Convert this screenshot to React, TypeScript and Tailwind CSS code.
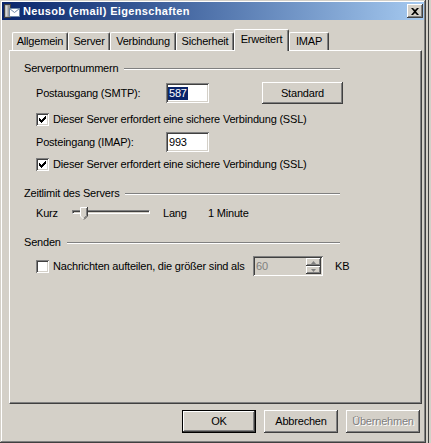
const raised =
  "shadow-[inset_-1px_-1px_#404040,inset_1px_1px_#ffffff,inset_-2px_-2px_#808080,inset_2px_2px_#d4d0c8]";
const sunken =
  "shadow-[inset_1px_1px_#808080,inset_-1px_-1px_#ffffff,inset_2px_2px_#404040,inset_-2px_-2px_#d4d0c8]";

const tabs = [
  { label: "Allgemein", w: "w-[56px]" },
  { label: "Server", w: "w-[42px]" },
  { label: "Verbindung", w: "w-[66px]" },
  { label: "Sicherheit", w: "w-[58px]" },
  { label: "Erweitert", w: "w-[55px]", active: true },
  { label: "IMAP", w: "w-[40px]" },
];

const Check = ({ checked }: { checked?: boolean }) => (
  <div className={`w-[13px] h-[13px] bg-white shrink-0 flex items-center justify-center ${sunken}`}>
    {checked && (
      <svg width="7" height="7" viewBox="0 0 7 7">
        <path d="M0 2h1v1h1v1h1V3h1V2h1V1h1V0h1v3H6v1H5v1H4v1H3v1H2V6H1V5H0z" fill="#000" />
      </svg>
    )}
  </div>
);

const Heading = ({ label }: { label: string }) => (
  <div className="flex items-center w-[316px] h-[13px]">
    <span className="leading-none">{label}</span>
    <div className="flex-1 ml-[6px] h-[2px] border-t border-t-[#808080] border-b border-b-white" />
  </div>
);

const Field = ({ children, className }: { children: React.ReactNode; className: string }) => (
  <div className={`bg-white h-[20px] px-[2px] flex items-center ${sunken} ${className}`}>{children}</div>
);

const Button = ({ label, def, disabled, className }: { label: string; def?: boolean; disabled?: boolean; className: string }) => (
  <div className={`${className} ${def ? "border border-black" : ""} flex`}>
    <div
      className={`flex-1 flex items-center justify-center ${raised} ${
        disabled ? "text-[#808080] [text-shadow:1px_1px_0_#ffffff]" : "text-black"
      }`}
    >
      {label}
    </div>
  </div>
);

const Thumb = () => (
  <svg width="8" height="13" viewBox="0 0 8 13" className="absolute left-[8px] top-[4px]">
    <path d="M0 0h8v9l-4 4-4-4z" fill="#d4d0c8" />
    <path d="M0.5 9V0.5H7" stroke="#ffffff" fill="none" />
    <path d="M7.5 0v9l-3.5 3.5" stroke="#404040" fill="none" />
    <path d="M6.5 1v7.6l-2.7 2.7" stroke="#808080" fill="none" />
    <path d="M0.5 9l3 3" stroke="#ffffff" fill="none" />
  </svg>
);

export default function App() {
  return (
    <div className="w-[431px] h-[443px] bg-[#d4d0c8] flex overflow-hidden text-[11px] tracking-[-0.2px] text-black font-['Liberation_Sans',Arial,sans-serif]">
      <div
        className={`w-[426px] h-[443px] pt-[2px] px-[2px] flex flex-col bg-[#d4d0c8] shadow-[inset_-1px_-1px_#404040,inset_1px_1px_#d4d0c8,inset_-2px_-2px_#808080,inset_2px_2px_#ffffff]`}
      >
        {/* title bar */}
        <div className="h-[18px] flex items-center bg-gradient-to-r from-[#0a246a] to-[#a6caf0] pl-[2px] pr-[1px]">
          <svg width="16" height="16" viewBox="0 0 16 16" className="shrink-0">
            <rect x="0.5" y="1.5" width="6" height="13" fill="#9a9a9a" stroke="#404040" />
            <rect x="1.5" y="2.5" width="2" height="11" fill="#d8d8d8" />
            <rect x="5.5" y="5.5" width="10" height="8" fill="#ffffff" stroke="#7088a8" />
            <path d="M5.5 5.5l5 4 5-4" fill="none" stroke="#7088a8" />
          </svg>
          <span className="ml-[3px] text-white font-bold text-[11px] leading-none tracking-[0.35px]">
            Neusob (email) Eigenschaften
          </span>
          <div className={`ml-auto w-[16px] h-[14px] bg-[#d4d0c8] flex items-center justify-center ${raised}`}>
            <svg width="8" height="7" viewBox="0 0 8 7">
              <path d="M0 0h2l2 2 2-2h2L5 3.5 8 7H6L4 5 2 7H0l3-3.5z" fill="#000" />
            </svg>
          </div>
        </div>

        {/* tabs */}
        <div className="mt-[9px] ml-[7px] pl-[3px] h-[21px] flex items-end">
          {tabs.map((t) =>
            t.active ? (
              <div
                key={t.label}
                className={`${t.w} h-[22px] -mb-px relative z-10 bg-[#d4d0c8] border-t border-l border-white border-r border-r-[#404040] rounded-t-[2px] shadow-[inset_-1px_0_#808080] flex items-center justify-center pb-[2px]`}
              >
                {t.label}
              </div>
            ) : (
              <div
                key={t.label}
                className={`${t.w} h-[18px] border-t border-l border-white border-r border-r-[#404040] rounded-t-[2px] shadow-[inset_-1px_0_#808080] flex items-center justify-center`}
              >
                {t.label}
              </div>
            )
          )}
        </div>

        {/* panel */}
        <div className="ml-[7px] w-[413px] h-[354px] border-t border-l border-white border-r border-b border-r-[#404040] border-b-[#404040] shadow-[inset_-1px_-1px_#808080] pl-[14px] flex flex-col">
          <div className="mt-[11px]">
            <Heading label="Serverportnummern" />
          </div>
          <div className="mt-[7px] pl-[12px] h-[22px] flex items-center">
            <span className="w-[130px]">Postausgang (SMTP):</span>
            <Field className="w-[43px]">
              <span className="bg-[#0a246a] text-white leading-[13px] px-px">587</span>
            </Field>
            <Button label="Standard" className="ml-[53px] w-[81px] h-[22px]" />
          </div>
          <div className="mt-[9px] pl-[12px] h-[13px] flex items-center gap-[4px]">
            <Check checked />
            <span className="whitespace-nowrap">Dieser Server erfordert eine sichere Verbindung (SSL)</span>
          </div>
          <div className="mt-[6px] pl-[12px] h-[20px] flex items-center">
            <span className="w-[130px]">Posteingang (IMAP):</span>
            <Field className="w-[43px]">
              <span className="px-px">993</span>
            </Field>
          </div>
          <div className="mt-[6px] pl-[12px] h-[13px] flex items-center gap-[4px]">
            <Check checked />
            <span className="whitespace-nowrap">Dieser Server erfordert eine sichere Verbindung (SSL)</span>
          </div>

          <div className="mt-[16px]">
            <Heading label="Zeitlimit des Servers" />
          </div>
          <div className="mt-[3px] pl-[12px] h-[20px] flex items-center">
            <span className="w-[36px]">Kurz</span>
            <div className="relative w-[78px] h-[20px]">
              <div className="absolute left-0 right-0 top-[7px] h-[4px] border-t border-l border-[#808080] border-b border-r border-b-white border-r-white shadow-[inset_1px_1px_#404040]" />
              <Thumb />
            </div>
            <span className="ml-[13px] w-[45px]">Lang</span>
            <span>1 Minute</span>
          </div>

          <div className="mt-[13px]">
            <Heading label="Senden" />
          </div>
          <div className="mt-[7px] pl-[12px] h-[20px] flex items-center">
            <Check />
            <span className="ml-[4px] w-[200px] whitespace-nowrap">Nachrichten aufteilen, die größer sind als</span>
            <div className={`w-[70px] h-[20px] bg-[#d4d0c8] flex items-center pl-[3px] pr-[2px] ${sunken}`}>
              <span className="flex-1 text-[#808080]">60</span>
              <div className="w-[15px] h-[16px] flex flex-col">
                <div className={`flex-1 flex items-center justify-center ${raised}`}>
                  <svg width="5" height="3" viewBox="0 0 5 3">
                    <path d="M2.5 0L5 3H0z" fill="#808080" />
                  </svg>
                </div>
                <div className={`flex-1 flex items-center justify-center ${raised}`}>
                  <svg width="5" height="3" viewBox="0 0 5 3">
                    <path d="M0 0h5L2.5 3z" fill="#808080" />
                  </svg>
                </div>
              </div>
            </div>
            <span className="ml-[12px]">KB</span>
          </div>
        </div>

        {/* buttons */}
        <div className="mt-[6px] ml-[7px] w-[411px] flex justify-end gap-[8px]">
          <Button label="OK" def className="w-[74px] h-[23px]" />
          <Button label="Abbrechen" className="w-[74px] h-[23px]" />
          <Button label="Übernehmen" disabled className="w-[74px] h-[23px]" />
        </div>
      </div>
      <div className="flex-1 flex">
        <div className="w-[2px]" />
        <div className="w-px bg-[#404040]" />
        <div className="flex-1 bg-[#d4d0c8]" />
      </div>
    </div>
  );
}
